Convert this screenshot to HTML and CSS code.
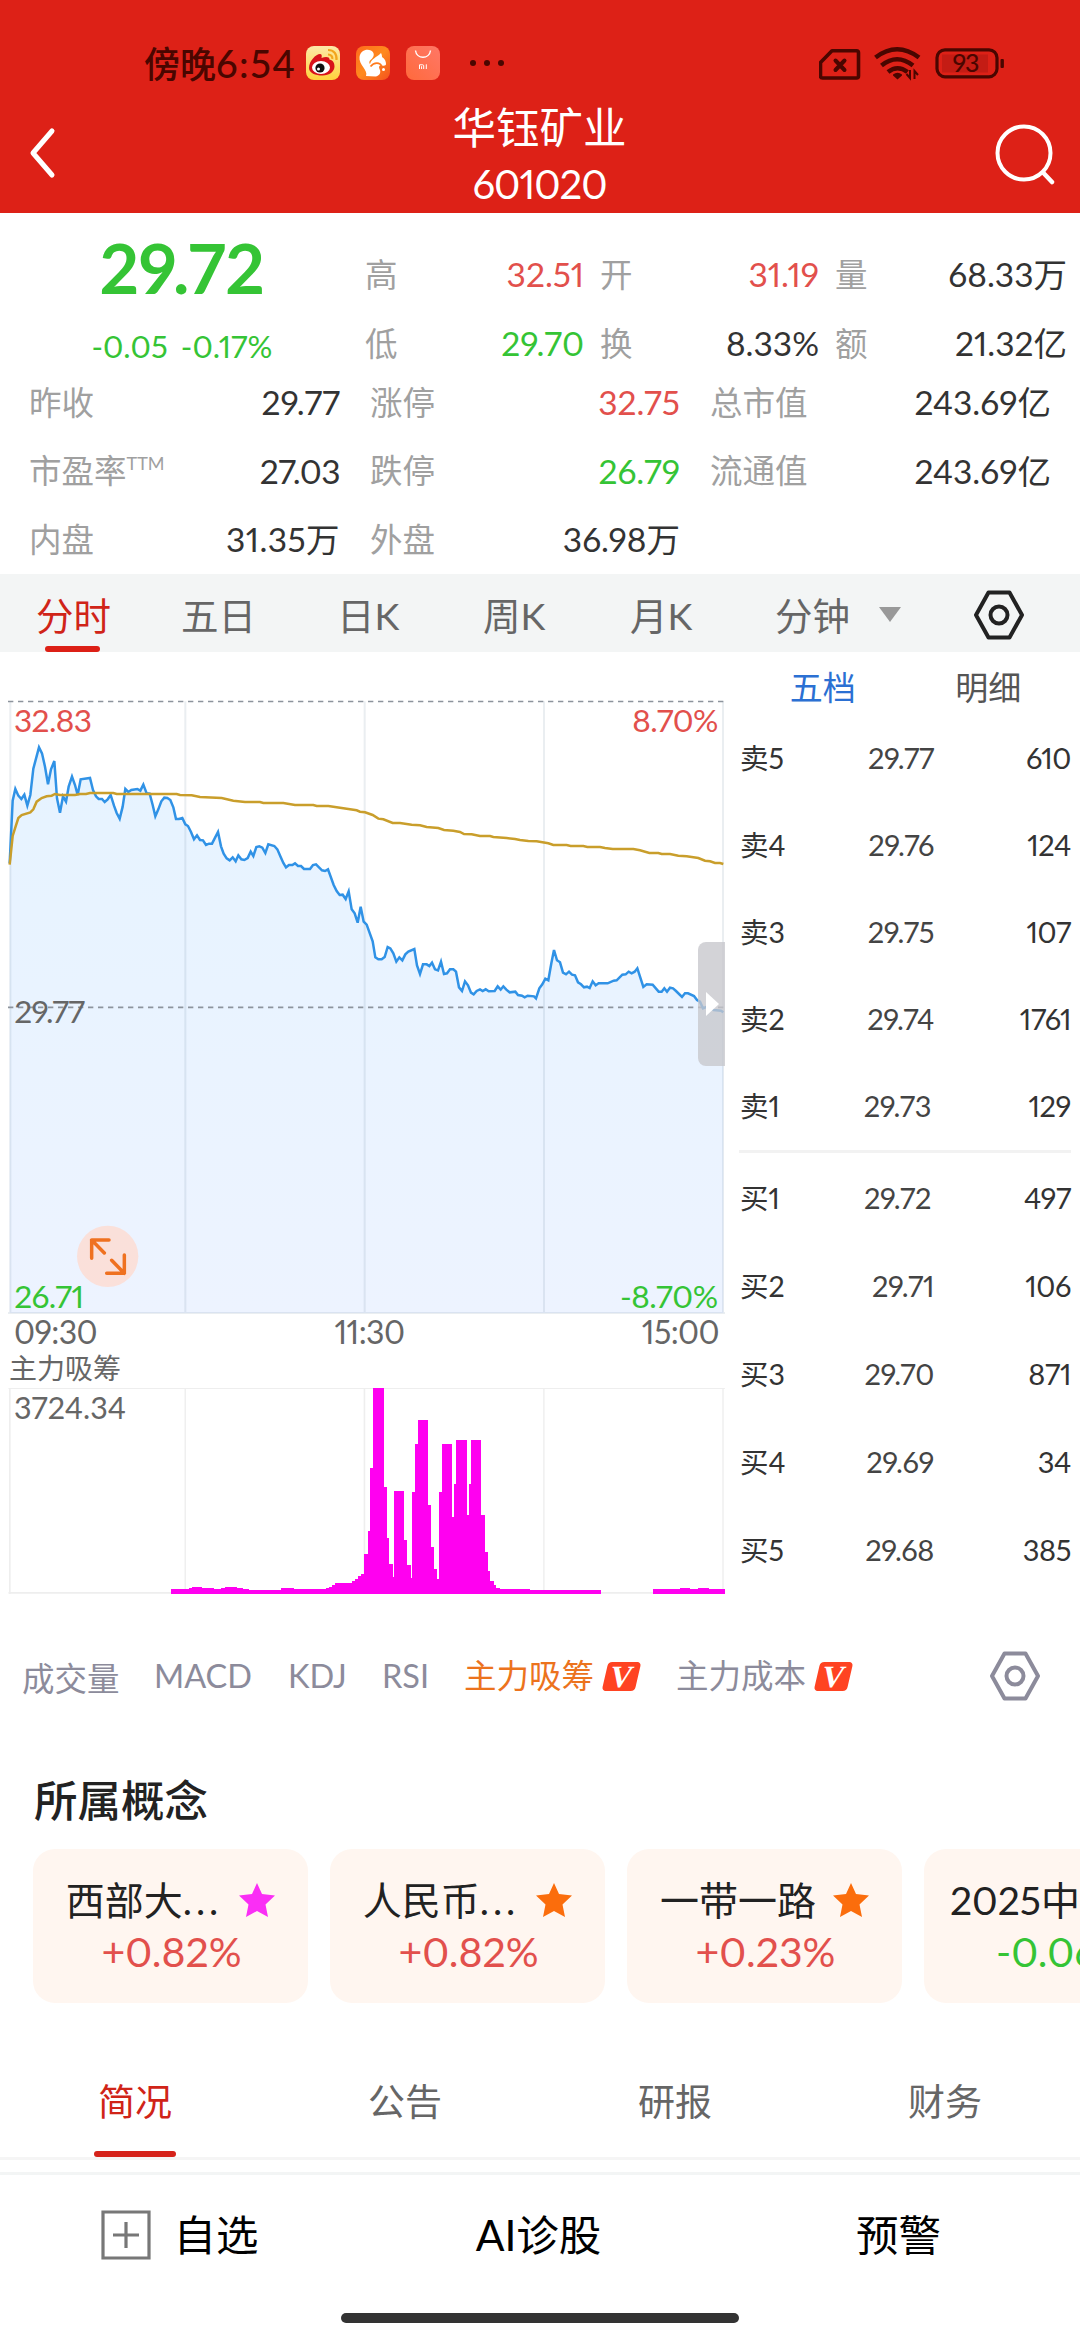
FILE: index.html
```html
<!DOCTYPE html>
<html lang="zh-CN">
<head>
<meta charset="utf-8">
<title>华钰矿业 601020</title>
<link rel="stylesheet" href="styles.css">
</head>
<body>
<div class="screen">
  <header class="header">
    <div class="status">
      <span class="clock">傍晚<span class="clock-num">6:54</span></span>
      <svg class="app" viewBox="0 0 34 34"><defs><linearGradient id="wb" x1="0" y1="0" x2="0" y2="1"><stop offset="0" stop-color="#fde9a9"/><stop offset="1" stop-color="#ffd23c"/></linearGradient></defs><rect width="34" height="34" rx="8" fill="url(#wb)"/><path d="M3 22C3 15 10 8 14 8c2 0 2 2 1.500 4 4-1.500 8-1.500 8 1.500 4 1 5 4 5 7 0 5-5 9-12 9S3 27 3 22z" fill="#d8121a"/><ellipse cx="15" cy="21.500" rx="9" ry="6.500" fill="#fff"/><circle cx="14" cy="22" r="4.600" fill="#111"/><circle cx="12.500" cy="23" r="1.500" fill="#fff"/><path d="M22 4c6 0 9 4 8.500 10M22 8.500c3 0 4.600 2 4.300 4.500" fill="none" stroke="#f2a51e" stroke-width="2.200"/></svg>
      <svg class="app" viewBox="0 0 34 34"><defs><linearGradient id="uc" x1="0" y1="0" x2="1" y2="1"><stop offset="0" stop-color="#ff6a1c"/><stop offset=".5" stop-color="#ff8a1e"/><stop offset="1" stop-color="#f4511e"/></linearGradient></defs><rect width="34" height="34" rx="8" fill="url(#uc)"/><path d="M10 30C12.500 24 2.500 19 3.500 11 4.500 5 10 2.500 15 4.500c4.500 2.500 3 7-.5 9.500-1.500 1.400-1.500 3-.5 4C16 12 20 12 25 7c1 2 1 3 1 4 3 2 4 4.500 4 7 0 1.500-1.500 2-4 1.500-3-.5-3.500 1-2.500 3.500 2 3.500 0 7-4 7.500z" fill="#fff"/><path d="M14.500 20.500c3.500-4.500 9.500-4.500 11-.5" fill="none" stroke="#ff7a1c" stroke-width="1.800"/><circle cx="27.500" cy="23.500" r="1.500" fill="#fff"/></svg>
      <svg class="app" viewBox="0 0 34 34"><defs><linearGradient id="mi" x1="1" y1="0" x2="0" y2="1"><stop offset="0" stop-color="#ff7766"/><stop offset="1" stop-color="#ff6a3c"/></linearGradient></defs><rect width="34" height="34" rx="8" fill="url(#mi)"/><path d="M9.500 4.500c1 9 14 9 15 0" fill="none" stroke="#fff" stroke-width="1.400"/><path d="M13.500 23v-4.200h3.200q1 0 1 1V23M15.600 20.200V23M20.300 18.300V23" fill="none" stroke="#fff" stroke-width="1"/></svg>
      <svg class="dots" viewBox="0 0 34 6"><circle cx="3" cy="3" r="3"/><circle cx="17" cy="3" r="3"/><circle cx="31" cy="3" r="3"/></svg>
      <svg class="sys" viewBox="0 0 190 40"><g fill="none" stroke="#4a0600" stroke-width="3.600"><path d="M13 6.800h24.500q2 0 2 2V32q0 2-2 2h-34q-2 0-2-2V18.500z" stroke-linejoin="round"/><path d="M16.500 16.500l9 9.500M25.500 16.500l-9 9.500" stroke-width="4" stroke-linecap="round"/><path d="M56.500 13.500q21.500-16.500 43.500 0M62.500 21.500q15.500-12.500 31.500 0M69 28q9.500-7.500 19.500 0" stroke-width="4.600"/><path d="M91 26v8l-3.500-4M95.500 35v-8l3.500 4" stroke-width="2"/><rect x="118" y="5.800" width="60" height="27" rx="8" stroke-width="3.200"/></g><path d="M74 30.500q4.500-3.500 9 0v1l-4.500 4-4.500-4z" fill="#4a0600"/><rect x="123" y="10.500" width="46" height="18" fill="#c41c14"/><rect x="181.500" y="15" width="3.400" height="9" rx="1" fill="#4a0600"/><text class="batt" x="133.500" y="28" textLength="27">93</text></svg>
    </div>
    <div class="nav">
      <svg class="back" viewBox="0 0 30 54"><path d="M25 5L6 27l19 22" fill="none" stroke="#fff" stroke-width="5" stroke-linecap="round" stroke-linejoin="round"/></svg>
      <div class="title"><div class="name">华钰矿业</div><div class="code">601020</div></div>
      <svg class="search" viewBox="0 0 60 64"><circle cx="29" cy="29" r="26.500" fill="none" stroke="#fff" stroke-width="4"/><path d="M48.500 49l8.500 9" stroke="#fff" stroke-width="4.500" stroke-linecap="round"/></svg>
    </div>
  </header>

  <section class="quote">
    <div class="last"><div class="price green">29.72</div><div class="chg green"><span>-0.05</span><span>-0.17%</span></div></div>
    <dl class="cell"><dt>高</dt><dd class="red">32.51</dd></dl>
    <dl class="cell"><dt>开</dt><dd class="red">31.19</dd></dl>
    <dl class="cell"><dt>量</dt><dd>68.33万</dd></dl>
    <dl class="cell"><dt>低</dt><dd class="green">29.70</dd></dl>
    <dl class="cell"><dt>换</dt><dd>8.33%</dd></dl>
    <dl class="cell"><dt>额</dt><dd>21.32亿</dd></dl>
  </section>
  <section class="stats">
    <dl class="cell"><dt>昨收</dt><dd>29.77</dd></dl>
    <dl class="cell"><dt>涨停</dt><dd class="red">32.75</dd></dl>
    <dl class="cell"><dt>总市值</dt><dd>243.69亿</dd></dl>
    <dl class="cell"><dt>市盈率<sup class="ttm">TTM</sup></dt><dd class="tight">27.03</dd></dl>
    <dl class="cell"><dt>跌停</dt><dd class="green">26.79</dd></dl>
    <dl class="cell"><dt>流通值</dt><dd>243.69亿</dd></dl>
    <dl class="cell"><dt>内盘</dt><dd class="loose">31.35万</dd></dl>
    <dl class="cell"><dt>外盘</dt><dd>36.98万</dd></dl>
  </section>

  <nav class="periods">
    <span class="on">分时</span><span>五日</span><span>日K</span><span>周K</span><span>月K</span><span>分钟</span>
    <svg class="caret" viewBox="0 0 22 15"><path d="M0 0h22L11 15z" fill="#999"/></svg>
    <svg class="hex dark" viewBox="0 0 50 50"><path d="M14.500 2.500h21L48 25 35.500 47.500h-21L2 25z"/><circle cx="25" cy="25" r="8.500"/></svg>
  </nav>

  <section class="market">
    <div class="charts">
      <svg class="pricechart" viewBox="0 0 2184 1878">
        <defs><linearGradient id="area" x1="0" y1="0" x2="0" y2="1"><stop offset="0" stop-color="#e6f3ff"/><stop offset="1" stop-color="#edf3ff"/></linearGradient></defs>
        <path fill="url(#area)" d="M29 520L38 332 46 297 55 317 64 327 73 314 82 347 91 315 100 236 117 172 126 190 135 230 144 283 153 238 163 213 171 325 180 368 189 319 198 335 206 290 216 260 225 285 233 315 242 268 270 264 279 300 288 319 296 327 306 327 314 336 323 328 332 315 342 347 350 369 359 386 368 350 376 297 385 306 394 300 412 297 421 302 430 284 440 310 449 311 458 345 466 379 475 358 484 334 493 323 502 324 511 330 520 352 528 387 537 387 547 384 556 403 564 408 573 426 582 448 591 436 600 450 609 451 618 465 627 461 636 461 654 426 663 469 671 491 680 505 689 511 698 502 707 514 715 496 724 508 733 510 743 504 752 485 760 498 769 471 778 469 787 473 796 489 805 463 823 468 832 478 841 499 850 519 858 532 867 525 877 525 885 520 894 528 903 528 912 537 930 537 939 525 948 523 957 532 966 541 975 543 984 538 1001 585 1010 603 1019 615 1028 614 1037 627 1046 604 1055 658 1064 670 1073 698 1082 650 1091 695 1100 704 1118 754 1126 802 1135 808 1145 808 1154 801 1163 771 1171 775 1180 790 1189 815 1198 802 1207 811 1216 793 1225 785 1243 777 1251 826 1260 852 1269 823 1280 823 1288 828 1296 818 1305 838 1314 841 1323 815 1332 852 1341 850 1350 838 1360 838 1368 845 1377 892 1386 903 1395 874 1404 886 1413 908 1421 913 1430 903 1440 898 1448 903 1457 898 1466 904 1484 903 1493 889 1502 899 1510 889 1519 899 1529 907 1546 905 1554 915 1566 917 1574 922 1583 917 1602 919 1608 925 1618 895 1627 883 1636 866 1645 871 1654 820 1662 780 1671 811 1680 817 1689 848 1698 853 1707 845 1716 854 1725 856 1734 877 1743 883 1752 892 1761 890 1769 894 1778 874 1787 886 1796 880 1823 880 1841 872 1850 871 1867 854 1877 853 1886 845 1895 850 1904 845 1912 835 1930 891 1940 883 1958 884 1976 905 1985 905 1993 895 2001 905 2010 893 2019 895 2028 903 2046 921 2055 910 2064 910 2082 918 2091 930 2100 935 2109 955 2118 951 2130 951 2141 960 2163 962 2170 967V1869H29z"/>
        <g fill="none" stroke="#5c7896" stroke-opacity=".13" stroke-width="6"><path d="M31 34V1869M556 34V1869M1094 34V1869M1632 34V1869M2169 34V1869M24 1869H2175"/></g>
        <g fill="none" stroke="#8d949d"><path stroke-width="4" d="M24 34.500H2170" stroke-dasharray="16 14"/><path stroke-width="5" d="M24 952H2170" stroke-dasharray="16 14"/></g>
        <path class="priceline" d="M29 520L38 332 46 297 55 317 64 327 73 314 82 347 91 315 100 236 117 172 126 190 135 230 144 283 153 238 163 213 171 325 180 368 189 319 198 335 206 290 216 260 225 285 233 315 242 268 270 264 279 300 288 319 296 327 306 327 314 336 323 328 332 315 342 347 350 369 359 386 368 350 376 297 385 306 394 300 412 297 421 302 430 284 440 310 449 311 458 345 466 379 475 358 484 334 493 323 502 324 511 330 520 352 528 387 537 387 547 384 556 403 564 408 573 426 582 448 591 436 600 450 609 451 618 465 627 461 636 461 654 426 663 469 671 491 680 505 689 511 698 502 707 514 715 496 724 508 733 510 743 504 752 485 760 498 769 471 778 469 787 473 796 489 805 463 823 468 832 478 841 499 850 519 858 532 867 525 877 525 885 520 894 528 903 528 912 537 930 537 939 525 948 523 957 532 966 541 975 543 984 538 1001 585 1010 603 1019 615 1028 614 1037 627 1046 604 1055 658 1064 670 1073 698 1082 650 1091 695 1100 704 1118 754 1126 802 1135 808 1145 808 1154 801 1163 771 1171 775 1180 790 1189 815 1198 802 1207 811 1216 793 1225 785 1243 777 1251 826 1260 852 1269 823 1280 823 1288 828 1296 818 1305 838 1314 841 1323 815 1332 852 1341 850 1350 838 1360 838 1368 845 1377 892 1386 903 1395 874 1404 886 1413 908 1421 913 1430 903 1440 898 1448 903 1457 898 1466 904 1484 903 1493 889 1502 899 1510 889 1519 899 1529 907 1546 905 1554 915 1566 917 1574 922 1583 917 1602 919 1608 925 1618 895 1627 883 1636 866 1645 871 1654 820 1662 780 1671 811 1680 817 1689 848 1698 853 1707 845 1716 854 1725 856 1734 877 1743 883 1752 892 1761 890 1769 894 1778 874 1787 886 1796 880 1823 880 1841 872 1850 871 1867 854 1877 853 1886 845 1895 850 1904 845 1912 835 1930 891 1940 883 1958 884 1976 905 1985 905 1993 895 2001 905 2010 893 2019 895 2028 903 2046 921 2055 910 2064 910 2082 918 2091 930 2100 935 2109 955 2118 951 2130 951 2141 960 2163 962 2170 967"/>
        <path class="avgline" d="M29 524L38 438 46 412 55 384 65 375 91 367 100 358 110 335 125 324 140 319 155 317 165 312 180 315 225 315 240 312 258 312 270 309 340 309 350 312 530 312 540 315 575 316 600 321 665 324 700 332 735 336 780 336 790 339 850 339 885 345 940 345 950 348 985 348 1030 355 1070 361 1080 365 1095 367 1118 375 1135 386 1150 388 1178 399 1200 399 1235 404 1260 406 1280 411 1315 414 1332 420 1360 422 1380 426 1392 432 1415 433 1440 438 1470 438 1480 441 1520 444 1545 447 1560 450 1585 453 1610 454 1645 460 1660 465 1700 465 1712 468 1750 468 1762 471 1800 471 1815 474 1838 477 1900 477 1920 481 1948 489 1975 489 1985 492 2010 492 2035 497 2060 499 2095 504 2115 512 2130 514 2145 519 2160 519 2170 522"/>
        <g class="axis"><text class="t-red" x="42" y="126" textLength="234">32.83</text><text class="t-red" x="1897" y="126" textLength="258">8.70%</text><text class="t-grey" x="43" y="999" textLength="212">29.77</text><text class="t-green" x="43" y="1855" textLength="209">26.71</text><text class="t-green" x="1860" y="1855" textLength="294">-8.70%</text></g>
        <g transform="translate(323 1699)"><circle r="92" fill="#ffd9cd" fill-opacity=".75"/><path d="M-48 6V-49H4M-48-49L-10-10M50-4V51H-3M50 51L12 12" fill="none" stroke="#ef7120" stroke-width="10.500" stroke-linecap="round" stroke-linejoin="round"/></g>
      </svg>
      <div class="times"><span>09:30</span><span>11:30</span><span>15:00</span></div>
      <div class="subname">主力吸筹</div>
      <div class="volume">
        <svg viewBox="0 564 1542.600 618" preserveAspectRatio="none">
          <path fill="#eee" d="M18 564h1518v3H18zM18 1176h1518v5H18zM19 564h3.500v618h-3.500zM391 564h3v618h-3zM770.500 564h3.500v618h-3.500zM1151 564h3v618h-3zM1530.500 564h3v618h-3z"/>
          <path fill="#ff00f0" shape-rendering="crispEdges" d="M362 1182V1168H400V1165H407V1161H428V1164H432V1163H453V1166H468V1163H476V1161H503V1165H515V1168H528V1169H596V1164H602V1163H623V1166H636V1168H679V1166H690V1164H698V1160H704V1156H710V1150H735V1148H745V1144H752V1136H758V1129H766V1121H772V1062H779V994H785V805H791V564H813V861H819V1015H825V1093H832V1131H835V872H856V1021H863V1096H870V1133H873V875H880V731H886V659H907V914H913V1042H920V1106H926V1138H930V876H936V731H958V950H961V851H967V719H990V944H993V851H999V719H1020V944H1027V1056H1033V1114H1039V1142H1046V1155H1052V1163H1060V1166H1070V1168H1094V1167H1124V1169H1273V1182zM1384 1182V1166H1414V1168H1430V1166H1440V1164H1463V1166H1478V1164H1502V1166H1512V1168H1536V1182z"/>
        </svg>
        <span class="volmax">3724.34</span>
      </div>
      <div class="handle"><svg viewBox="0 0 13 24"><path d="M0 0l13 12L0 24z" fill="#fff"/></svg></div>
    </div>
    <div class="book">
      <div class="booktabs"><span class="on">五档</span><span>明细</span></div>
      <div class="side sell">
        <div class="row"><b>卖5</b><i>29.77</i><em>610</em></div>
        <div class="row"><b>卖4</b><i>29.76</i><em>124</em></div>
        <div class="row"><b>卖3</b><i>29.75</i><em>107</em></div>
        <div class="row"><b>卖2</b><i>29.74</i><em>1761</em></div>
        <div class="row"><b>卖1</b><i class="far">29.73</i><em>129</em></div>
      </div>
      <div class="side buy">
        <div class="row"><b>买1</b><i class="far">29.72</i><em>497</em></div>
        <div class="row"><b>买2</b><i>29.71</i><em>106</em></div>
        <div class="row"><b>买3</b><i>29.70</i><em>871</em></div>
        <div class="row"><b>买4</b><i>29.69</i><em>34</em></div>
        <div class="row"><b>买5</b><i>29.68</i><em>385</em></div>
      </div>
    </div>
  </section>

  <nav class="indicators">
    <span>成交量</span><span class="lat">MACD</span><span class="lat">KDJ</span><span class="lat">RSI</span>
    <span class="vip on">主力吸筹<span class="badge"><span class="v">V</span></span></span>
    <span class="vip">主力成本<span class="badge"><span class="v">V</span></span></span>
    <svg class="hex" viewBox="0 0 50 50"><path d="M14.500 2.500h21L48 25 35.500 47.500h-21L2 25z"/><circle cx="25" cy="25" r="8.500"/></svg>
  </nav>

  <h2 class="heading">所属概念</h2>
  <div class="concepts">
    <div class="card"><div class="cname"><span>西部大<span class="more">...</span></span><svg class="pink" viewBox="0 0 36 34"><path d="M18 0l5 11 13 1.500-9.500 9L29 34 18 28 7 34l2.500-12.500L0 12.500 13 11z"/></svg></div><div class="pct red">+0.82%</div></div>
    <div class="card"><div class="cname"><span>人民币<span class="more">...</span></span><svg viewBox="0 0 36 34"><path d="M18 0l5 11 13 1.500-9.500 9L29 34 18 28 7 34l2.500-12.500L0 12.500 13 11z"/></svg></div><div class="pct red">+0.82%</div></div>
    <div class="card"><div class="cname">一带一路<svg viewBox="0 0 36 34"><path d="M18 0l5 11 13 1.500-9.500 9L29 34 18 28 7 34l2.500-12.500L0 12.500 13 11z"/></svg></div><div class="pct red">+0.23%</div></div>
    <div class="card wide"><div class="cname">2025中</div><div class="pct green">-0.06%</div></div>
  </div>

  <nav class="infotabs"><span class="on">简况</span><span>公告</span><span>研报</span><span>财务</span></nav>
  <footer class="footer">
    <span class="add"><svg viewBox="0 0 50 50"><path d="M2 2h46v46H2zM25 12v26M12 25h26" fill="none" stroke="#777" stroke-width="3.200"/></svg>自选</span>
    <span>AI诊股</span>
    <span>预警</span>
  </footer>
  <div class="homebar"></div>
</div>
</body>
</html>
```
FILE: styles.css
```css
* { box-sizing: border-box; margin: 0; padding: 0; }
body { width: 1080px; height: 2340px; background: #fff; overflow: hidden; }
svg { display: block; flex: none; }
.screen { display: flex; flex-direction: column; width: 1080px; height: 2340px; overflow: hidden; font-family: Lato, "Noto Sans CJK SC", sans-serif; font-variant-numeric: proportional-nums; color: #333; white-space: nowrap; }
.red { color: #e2504c; }
.green { color: #35c435; }

.header { height: 213px; background: #dd2117; color: #fff; }
.status { display: flex; align-items: center; height: 98px; padding: 32px 0 4px 144px; color: #4a0600; }
.clock { width: 162px; font-size: 36px; line-height: 50px; font-weight: 500; }
.clock-num { font-size: 38px; letter-spacing: 1.500px; }
.app { width: 34px; height: 34px; margin-right: 16px; }
.dots { width: 34px; height: 6px; margin-left: 14px; fill: #4a0600; }
.sys { width: 190px; height: 40px; margin-left: 315px; margin-top: 1px; }
.batt { font-size: 25px; font-weight: 500; fill: #4a0600; }
.nav { display: flex; height: 115px; padding: 0 25px 0 27px; }
.back { width: 30px; height: 54px; margin-top: 28px; }
.title { flex: 1; text-align: center; padding-left: 27px; }
.name { font-size: 43.500px; line-height: 58px; }
.code { font-size: 40px; line-height: 57px; letter-spacing: -1px; }
.search { width: 60px; height: 64px; margin-top: 26px; }

.quote { display: grid; grid-template-columns: 349px 219px 219px 232px; column-gap: 16px; grid-template-rows: 69px 69px; height: 166px; padding-top: 27px; }
.last { grid-row: 1 / 3; text-align: center; padding-left: 15px; }
.price { font-size: 69px; font-weight: 700; line-height: 70px; margin-top: -7px; letter-spacing: -.4px; }
.chg { display: flex; justify-content: center; gap: 13px; margin-top: 23px; font-size: 31px; line-height: 40px; letter-spacing: .1px; }
.cell { display: flex; justify-content: space-between; align-items: center; height: 69px; font-size: 33.500px; line-height: 40px; }
.cell dt { font-size: 32.500px; color: #a0a0a0; }
.cell dd { margin-top: -1px; }
.tight { letter-spacing: -.6px; }
.loose { letter-spacing: .4px; }
.stats { display: grid; grid-template-columns: 311px 310px 341px; grid-template-rows: repeat(3, 68.500px); column-gap: 30px; height: 206px; padding-left: 29px; margin-top: -11px; }
.ttm { font-size: 18px; line-height: 0; vertical-align: 13px; }

.periods { display: grid; grid-template-columns: 145px 156px 146px 147px 145px 104px 95px 50px; align-items: center; height: 78px; padding: 0 0 0 36px; background: #f3f5f5; font-size: 37.500px; color: #666; }
.periods span { line-height: 78px; padding-top: 3px; height: 78px; }
.periods .on { color: #d02418; position: relative; }
.periods .on::after { content: ""; position: absolute; left: 9px; bottom: 0; width: 55px; height: 6px; border-radius: 3px; background: #dc2016; }
.caret { width: 22px; height: 15px; margin-top: 2px; }
.hex { width: 50px; height: 50px; fill: none; stroke: #8c8b9b; stroke-width: 4; stroke-linejoin: round; }
.dark { stroke: #222; margin-top: 4px; }

.market { display: grid; grid-template-columns: 728px 352px; height: 964px; }
.charts { position: relative; padding-top: 38px; }
.pricechart { width: 728px; height: 626px; }
.priceline { fill: none; stroke: #3092e6; stroke-width: 7.500; }
.avgline { fill: none; stroke: #c99e2b; stroke-width: 7.500; }
.axis { font-size: 95px; }
.t-red { fill: #e2504c; }
.t-green { fill: #35c435; }
.t-grey { fill: #666; }
.times { display: flex; justify-content: space-between; padding: 0 9px 0 14px; height: 32px; line-height: 32px; font-size: 32px; color: #666; letter-spacing: -.6px; }
.subname { padding-left: 9px; height: 40px; line-height: 40px; font-size: 28px; color: #666; }
.volume { position: relative; height: 206px; }
.volume svg { width: 728px; height: 206px; }
.volmax { position: absolute; left: 14px; top: -1px; line-height: 40px; font-size: 30.500px; color: #666; }
.handle { position: absolute; left: 698px; top: 290px; width: 27px; height: 124px; display: flex; align-items: center; padding-left: 8px; border-radius: 8px 0 0 8px; background: rgba(198, 198, 204, .78); }
.handle svg { width: 13px; height: 24px; }

.book { padding-right: 9px; }
.booktabs { display: grid; grid-template-columns: 1fr 1fr; height: 62px; padding: 14px 0 0 12px; text-align: center; font-size: 33px; line-height: 43px; color: #555; }
.booktabs .on { color: #2b70d3; }
.side { display: flex; flex-direction: column; margin-left: 11px; }
.sell { height: 439px; border-bottom: 3px solid #f2f2f2; }
.buy { padding-top: 1px; }
.row { display: grid; grid-template-columns: 101px 94px 1fr; height: 87.500px; align-items: center; font-size: 29px; line-height: 40px; }
.buy .row { height: 88px; }
.row b { font-weight: 400; font-size: 28.500px; padding-left: 1px; }
.row i, .row em { font-style: normal; text-align: right; letter-spacing: -.4px; }
.row i { color: #444; }
.row .far { padding-right: 3px; }

.indicators { display: grid; grid-template-columns: 132px 134px 94px 82px 212px 314px 50px; align-items: center; height: 120px; padding-left: 22px; font-size: 32.500px; color: #8c8b9b; }
.lat { line-height: 50px; }
.vip { display: flex; align-items: center; gap: 11px; line-height: 50px; }
.badge { width: 33px; height: 29px; border-radius: 4px; background: #ff4322; transform: skewX(-13deg); display: flex; justify-content: center; margin-top: 1px; }
.v { font: bold 31px/29px "Liberation Serif", serif; color: #fff; }
.indicators .on { color: #ec731d; }

.heading { height: 113px; padding: 33px 0 0 34px; font-size: 43.500px; line-height: 62px; font-weight: 500; color: #222; }
.concepts { display: flex; gap: 22px; padding-left: 33px; height: 154px; }
.card { flex: none; width: 275px; border-radius: 22px; background: #fff6f0; text-align: center; padding-top: 26px; }
.cname { display: flex; align-items: center; justify-content: center; gap: 17px; font-size: 39px; line-height: 50px; color: #222; }
.cname svg { width: 36px; height: 34px; fill: #fb6d0c; }
.cname .pink { fill: #fa2ef5; }
.more { letter-spacing: 4px; }
.pct { font-size: 41px; line-height: 54px; padding-left: 2px; }
.wide { text-align: left; padding-left: 26px; }
.wide .cname { justify-content: flex-start; }
.wide .pct { padding-left: 46px; }

.infotabs { display: grid; grid-template-columns: repeat(4, 270px); height: 157px; border-bottom: 3px solid #f5f5f5; text-align: center; font-size: 37px; color: #666; }
.infotabs span { height: 154px; line-height: 60px; padding-top: 69px; position: relative; }
.infotabs .on { color: #d02418; }
.infotabs .on::after { content: ""; position: absolute; left: 94px; bottom: 0; width: 82px; height: 6px; border-radius: 3px; background: #d5221a; }
.footer { display: grid; grid-template-columns: 360px 357px 363px; margin-top: 12px; height: 141px; border-top: 3px solid #f3f5f5; text-align: center; font-size: 42.500px; line-height: 60px; padding-top: 30px; color: #000; }
.add { display: flex; justify-content: center; align-items: center; gap: 22px; height: 60px; }
.add svg { width: 50px; height: 50px; }
.homebar { width: 398px; height: 10px; border-radius: 5px; background: #333; margin-left: 341px; }
```
